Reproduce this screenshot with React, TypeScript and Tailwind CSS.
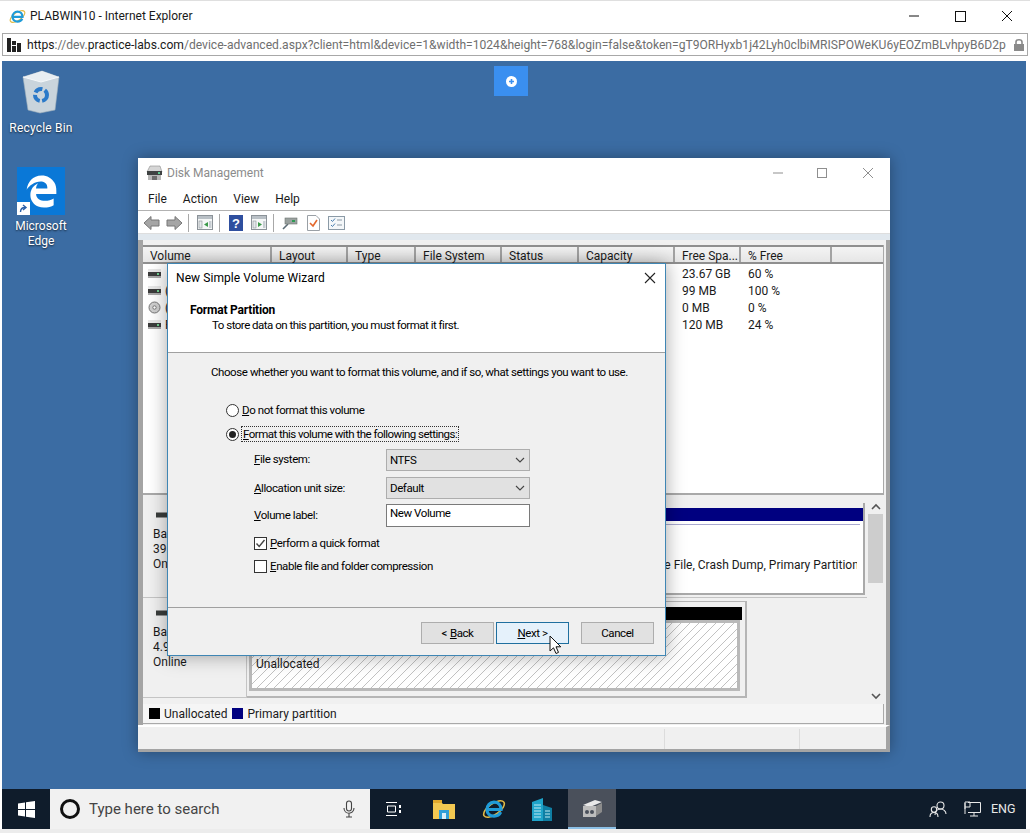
import React from "react";
import { FaEdgeLegacy } from "react-icons/fa";

function IELogo({ size = 18 }: { size?: number }) {
  return (
    <svg width={size} height={size} viewBox="0 0 24 24" fill="none">
      <ellipse cx="12" cy="12" rx="12" ry="5.5" transform="rotate(-35 12 12)" stroke="#e3bb45" strokeWidth="1.6" />
      <path d="M5 12.5H19C19 8 16 5.2 12 5.2C8 5.2 5 8.5 5 12.5C5 16.5 8 19.2 12 19.2C15 19.2 17.5 17.8 18.7 15.2" stroke="#1f9bd8" strokeWidth="3.2" />
    </svg>
  );
}

function Drive({ disc = false }: { disc?: boolean }) {
  if (disc)
    return (
      <svg width="13" height="13" viewBox="0 0 13 13">
        <circle cx="6.5" cy="6.5" r="5.5" fill="#cfcfcf" stroke="#777" />
        <circle cx="6.5" cy="6.5" r="1.7" fill="#fff" stroke="#777" />
      </svg>
    );
  return (
    <svg width="13" height="9" viewBox="0 0 13 9">
      <rect x="0" y="0" width="13" height="3" fill="#e8e8e8" />
      <rect x="0" y="3" width="13" height="4" fill="#3c3c3c" />
      <rect x="9" y="4" width="2" height="2" fill="#6fcf8f" />
      <rect x="0" y="7" width="13" height="2" fill="#a8a8a8" />
    </svg>
  );
}

function DiskIcon() {
  return (
    <svg width="18" height="6" viewBox="0 0 18 6">
      <rect width="18" height="5" y="0.5" fill="#3a3d3c" />
      <rect x="12" y="2" width="2" height="2" fill="#55c48b" />
    </svg>
  );
}

function Toolbar() {
  const sep = <div className="w-px h-[18px] bg-[#a8a8a8]" />;
  const arrow = (flip: boolean) => (
    <svg width="17" height="16" viewBox="0 0 17 16" className={flip ? "-scale-x-100" : ""}>
      <path d="M1 8 8 1.5V5H16V11H8V14.5Z" fill="#a5a5a5" stroke="#777" />
    </svg>
  );
  const pane = (right: boolean) => (
    <svg width="16" height="15" viewBox="0 0 16 15">
      <rect x="0.5" y="0.5" width="15" height="14" fill="#f5f7f7" stroke="#8b9298" />
      <rect x="1" y="1" width="14" height="3" fill="#b9c0c6" />
      <rect x="2" y="6" width="3" height="7" fill="#e4e8ea" stroke="#8b9298" strokeWidth="0.6" />
      <path d={right ? "M7 7 11 9.5 7 12Z" : "M11 7 7 9.5 11 12Z"} fill="#3c9a4a" />
      <rect x="12" y="6" width="2.5" height="7" fill="#c7cdd2" />
    </svg>
  );
  return (
    <div className="h-[22px] bg-white flex items-center pl-[5px] pt-[1px]">
      {arrow(false)}
      <div className="w-[6px]" />
      {arrow(true)}
      <div className="w-[5px]" />
      {sep}
      <div className="w-[8px]" />
      {pane(false)}
      <div className="w-[6px]" />
      {sep}
      <div className="w-[9px]" />
      <svg width="14" height="16" viewBox="0 0 14 16">
        <rect width="14" height="16" fill="#2f4f9f" />
        <text x="7" y="13" textAnchor="middle" fontSize="13" fontWeight="700" fill="#fff" fontFamily="Liberation Sans">?</text>
      </svg>
      <div className="w-[8px]" />
      {pane(true)}
      <div className="w-[6px]" />
      {sep}
      <div className="w-[8px]" />
      <svg width="16" height="15" viewBox="0 0 16 15">
        <path d="M1 14 6 9" stroke="#5b6b75" strokeWidth="1.6" />
        <rect x="3" y="3" width="12" height="6" fill="#9aa19f" stroke="#6e7573" strokeWidth="0.6" />
        <rect x="10" y="5" width="3" height="2" fill="#2e9a54" />
      </svg>
      <div className="w-[9px]" />
      <svg width="13" height="16" viewBox="0 0 13 16">
        <path d="M.5.5H9L12.5 4V15.5H.5Z" fill="#fff" stroke="#9aa0a6" />
        <path d="M3 8 6 11 10 5" stroke="#e4672b" strokeWidth="1.6" fill="none" />
      </svg>
      <div className="w-[8px]" />
      <svg width="17" height="14" viewBox="0 0 17 14">
        <rect x="0.5" y="0.5" width="16" height="13" fill="#f4f7f9" stroke="#8b9aa6" />
        <path d="M3 4 4.5 5.5 7 2.5M3 9 4.5 10.5 7 7.5" stroke="#4a7fb0" fill="none" />
        <path d="M9 4H14M9 9H14" stroke="#8b9aa6" />
      </svg>
    </div>
  );
}

const cols = [
  ["Volume", "w-[129px]"],
  ["Layout", "w-[76px]"],
  ["Type", "w-[68px]"],
  ["File System", "w-[86px]"],
  ["Status", "w-[77px]"],
  ["Capacity", "w-[96px]"],
  ["Free Spa...", "w-[66px]"],
  ["% Free", "w-[91px]"],
  ["", "flex-1"],
];

const rows: [string, string, string, boolean][] = [
  ["", "23.67 GB", "60 %", false],
  ["(Disk 0 partition 1)", "99 MB", "100 %", false],
  ["(D:)", "0 MB", "0 %", true],
  ["Recovery", "120 MB", "24 %", false],
];

function VolumeList() {
  return (
    <div className="h-[250px] bg-white border-b-2 border-r border-[#a9a9a9] flex flex-col">
      <div className="h-[19px] flex border-t-2 border-b-2 border-[#8f8f8f] bg-gradient-to-b from-[#f4f4f4] to-[#e6e6e6]">
        {cols.map(([name, w], i) => (
          <div key={i} className={`${w} pl-[7px] leading-[18px] border-r-2 border-[#a3a3a3] last:border-r-0 whitespace-nowrap`}>
            {name}
          </div>
        ))}
      </div>
      <div className="pt-[1px]">
        {rows.map(([v, free, pct, disc], i) => (
          <div key={i} className="h-[17px] flex items-center">
            <div className="w-[532px] flex items-center pl-[5px] gap-[4px] whitespace-nowrap">
              <div className="w-[13px] flex justify-center">
                <Drive disc={disc} />
              </div>
              <span>{v}</span>
            </div>
            <div className="w-[66px] pl-[7px]">{free}</div>
            <div className="pl-[7px]">{pct}</div>
          </div>
        ))}
      </div>
    </div>
  );
}

function DiskPanes() {
  return (
    <div className="h-[209px] flex bg-[#f0f0f0]">
      <div className="flex-1 flex flex-col min-w-0">
        <div className="h-[102px] flex pt-[8px] pb-[2px]">
          <div className="w-[106px] pl-[10px] pt-[9px] leading-[15px]">
            <div className="pl-[3px] h-[15px]"><DiskIcon /></div>
            <div>Basic</div>
            <div>39.88 GB</div>
            <div>Online</div>
          </div>
          <div className="w-[616px] border-r-2 border-b-2 border-[#a9a9a9] bg-white flex flex-col">
            <div className="h-[5px] bg-[#f0f0f0]" />
            <div className="h-[13px] bg-[#000080]" />
            <div className="h-[3px]" />
            <div className="h-px bg-[#a9a9d0] mr-[3px]" />
            <div className="flex-1 flex items-center justify-end pt-[12px] pr-[6px]">
              <div className="flex justify-end overflow-hidden">
                <span className="shrink-0 whitespace-nowrap -mr-[6px]">Healthy (Boot, Page File, Crash Dump, Primary Partition)</span>
              </div>
            </div>
          </div>
        </div>
        <div className="h-[107px] flex border-t border-[#c4c4c4] pt-[3px] pb-[6px]">
          <div className="w-[104px] pl-[10px] pt-[9px] leading-[15px] border-r border-[#c4c4c4] border-b">
            <div className="pl-[3px] h-[15px]"><DiskIcon /></div>
            <div>Basic</div>
            <div>4.98 GB</div>
            <div>Online</div>
          </div>
          <div className="w-[500px] border-r-2 border-b-2 border-t border-[#b5b5b5] pl-[2px] pr-[3px] pt-[5px] pb-[5px] flex flex-col">
            <div className="h-[13px] bg-black" />
            <div className="flex-1 border-[3px] border-[#b9b9b9] mr-[2px] pl-[4px] pt-[34px] leading-[15px] bg-[repeating-linear-gradient(135deg,#ffffff,#ffffff_5.5px,#c2c2c2_5.5px,#c2c2c2_6.2px)]">
              Unallocated
            </div>
          </div>
        </div>
      </div>
      <div className="w-[17px] flex flex-col items-center bg-[#f0f0f0] shrink-0">
        <svg width="10" height="7" viewBox="0 0 10 7" className="mt-[8px]"><path d="M1 6 5 2 9 6" fill="none" stroke="#555" strokeWidth="1.6" /></svg>
        <div className="w-[15px] h-[69px] mt-[4px] bg-[#cdcdcd]" />
        <div className="flex-1" />
        <svg width="10" height="7" viewBox="0 0 10 7" className="mb-[4px]"><path d="M1 1 5 5 9 1" fill="none" stroke="#555" strokeWidth="1.6" /></svg>
      </div>
    </div>
  );
}

function DiskManagement() {
  return (
    <div className="absolute left-[136px] top-[97px] w-[752px] h-[594px] flex flex-col bg-white shadow-[0_0_14px_rgba(0,0,0,0.35)]">
      <div className="h-[30px] flex items-center pl-[8px] shrink-0">
        <svg width="17" height="16" viewBox="0 0 17 16">
          <path d="M1 7 4 1H14L16 7Z" fill="#d6d6d6" stroke="#8a8a8a" strokeWidth="0.6" />
          <rect x="1" y="6" width="15" height="4" fill="#3f4242" />
          <rect x="12" y="7" width="2" height="2" fill="#5ac88f" />
          <rect x="2" y="10" width="13" height="5" fill="#b7b7b7" />
          <rect x="6" y="11" width="5" height="4" fill="#6d6d6d" />
        </svg>
        <span className="ml-[4px] text-[#8b8b8b]">Disk Management</span>
        <div className="flex-1" />
        <svg width="12" height="12" viewBox="0 0 12 12" className="mr-[33px]"><path d="M1 6H11" stroke="#8f8f8f" /></svg>
        <div className="w-[10px] h-[10px] border border-[#8f8f8f] mr-[35px]" />
        <svg width="12" height="12" viewBox="0 0 12 12" className="mr-[16px]"><path d="M1 1 11 11M11 1 1 11" stroke="#8f8f8f" /></svg>
      </div>
      <div className="h-[23px] flex items-center gap-[16px] pl-[10px] border-b border-[#b2b2b2] shrink-0">
        <span>File</span>
        <span>Action</span>
        <span>View</span>
        <span>Help</span>
      </div>
      <Toolbar />
      <div className="h-[7px] bg-[#e1e8ee] border-t border-[#dedede] shrink-0" />
      <div className="h-[485px] bg-[#f0f0f0] border-l-[5px] border-r-[4px] border-[#a4a4a4] pr-[2px] pt-[5px] flex flex-col shrink-0">
        <VolumeList />
        <DiskPanes />
        <div className="h-[20px] flex items-center gap-[4px] bg-[#f5f5f5] border-b border-r border-[#a9a9a9] pl-[6px]">
          <div className="w-[11px] h-[11px] bg-black" />
          <span className="mr-[1px]">Unallocated</span>
          <div className="w-[11px] h-[11px] bg-[#000080]" />
          <span>Primary partition</span>
        </div>
      </div>
      <div className="flex-1 bg-[#f0f0f0] border-t-[2px] border-t-white border-r-[4px] border-r-[#a4a4a4] flex justify-end">
        <div className="w-[135px] border-l border-[#dcdcdc] mt-[2px]" />
        <div className="w-[87px] border-l border-[#dcdcdc] mt-[2px]" />
      </div>
      <div className="h-[3px] bg-[#a4a4a4] shrink-0" />
    </div>
  );
}

function Radio({ on = false }: { on?: boolean }) {
  return (
    <div className="w-[13px] h-[13px] rounded-full border border-[#333] bg-white flex items-center justify-center shrink-0">
      {on && <div className="w-[7px] h-[7px] rounded-full bg-[#222]" />}
    </div>
  );
}

function Check({ on = false }: { on?: boolean }) {
  return (
    <div className="w-[13px] h-[13px] border border-[#333] bg-white shrink-0">
      {on && (
        <svg width="11" height="11" viewBox="0 0 11 11">
          <path d="M1.5 5.5 4.2 8.5 9.5 2" fill="none" stroke="#444" strokeWidth="1.4" />
        </svg>
      )}
    </div>
  );
}

function Select({ value, className = "" }: { value: string; className?: string }) {
  return (
    <div className={`w-[144px] h-[22px] bg-[#e1e1e1] border border-[#adadad] flex items-center pl-[3px] pr-[4px] ${className}`}>
      <span className="flex-1">{value}</span>
      <svg width="10" height="6" viewBox="0 0 10 6"><path d="M1 1 5 5 9 1" fill="none" stroke="#444" strokeWidth="1.1" /></svg>
    </div>
  );
}

function Btn({ children, active = false, className = "" }: { children: React.ReactNode; active?: boolean; className?: string }) {
  return (
    <div className={`w-[73px] h-[22px] flex items-center justify-center border ${active ? "bg-[#e5f1fb] border-[#1f6f9f]" : "bg-[#e1e1e1] border-[#adadad]"} ${className}`}>
      {children}
    </div>
  );
}

function Wizard() {
  return (
    <div className="absolute left-[165px] top-[202px] w-[499px] h-[393px] flex flex-col bg-[#f0f0f0] border border-[#3f86b4] shadow-[0_0_18px_rgba(0,0,0,0.35)] text-black text-[11.5px] tracking-[-0.42px]">
      <div className="h-[89px] bg-white border-b border-[#a0a0a0] shrink-0">
        <div className="h-[27px] flex items-center pl-[8px] pr-[9px] text-[12px] tracking-[0.08px]">
          <span className="flex-1">New Simple Volume Wizard</span>
          <svg width="12" height="12" viewBox="0 0 12 12"><path d="M1 1 11 11M11 1 1 11" stroke="#222" strokeWidth="1.1" /></svg>
        </div>
        <div className="pl-[22px] pt-[11px] font-bold leading-[16px] text-[12px] tracking-[-0.2px]">Format Partition</div>
        <div className="pl-[44px] leading-[15px] tracking-[-0.5px]">To store data on this partition, you must format it first.</div>
      </div>
      <div className="h-[255px] border-b border-[#a0a0a0] shrink-0 pt-[10px] pl-[43px] flex flex-col">
        <div className="h-[18px] leading-[18px] whitespace-nowrap">Choose whether you want to format this volume, and if so, what settings you want to use.</div>
        <div className="h-[18px] mt-[20px] flex items-center gap-[3px] ml-[15px]">
          <Radio />
          <span><u>D</u>o not format this volume</span>
        </div>
        <div className="h-[18px] mt-[6px] flex items-center gap-[2px] ml-[15px]">
          <Radio on />
          <span className="border border-dotted border-[#333] px-[1px] leading-[14px] tracking-[-0.52px]"><u>F</u>ormat this volume with the following settings:</span>
        </div>
        <div className="ml-[43px] mt-[6px] flex items-center h-[22px]">
          <span className="w-[132px] pb-[2px]"><u>F</u>ile system:</span>
          <Select value="NTFS" />
        </div>
        <div className="ml-[43px] mt-[6px] flex items-center h-[22px]">
          <span className="w-[132px] pb-[1px]"><u>A</u>llocation unit size:</span>
          <Select value="Default" />
        </div>
        <div className="ml-[43px] mt-[5px] flex items-center h-[23px]">
          <span className="w-[132px] pb-[2px]"><u>V</u>olume label:</span>
          <div className="w-[144px] h-[23px] bg-white border border-[#7a7a7a] pl-[3px] leading-[17px]">New Volume</div>
        </div>
        <div className="ml-[43px] mt-[9px] flex items-center gap-[3px] h-[14px]">
          <Check on />
          <span><u>P</u>erform a quick format</span>
        </div>
        <div className="ml-[43px] mt-[9px] flex items-center gap-[3px] h-[14px]">
          <Check />
          <span><u>E</u>nable file and folder compression</span>
        </div>
      </div>
      <div className="flex-1 flex justify-end items-start pt-[14px] pr-[11px]">
        <Btn className="mr-[2px]">&lt; <u className="ml-[3px]">B</u>ack</Btn>
        <Btn active className="mr-[12px]"><u>N</u>ext &gt;</Btn>
        <Btn>Cancel</Btn>
      </div>
    </div>
  );
}

function Taskbar() {
  return (
    <div className="h-[40px] ml-[2px] mr-[4px] bg-[#0f1c2b] flex items-stretch shrink-0">
      <div className="w-[48px] flex items-center justify-center">
        <svg width="17" height="17" viewBox="0 0 17 17" fill="#fff">
          <path d="M0 2.4 7 1.4V8H0ZM8 1.2 17 0V8H8ZM0 9H7V15.6L0 14.6ZM8 9H17V17L8 15.8Z" />
        </svg>
      </div>
      <div className="w-[320px] bg-[#f1f1f1] flex items-center pl-[10px] pr-[15px] text-[15px] text-[#444]">
        <div className="w-[20px] h-[20px] rounded-full border-[3px] border-[#111]" />
        <span className="ml-[9px] flex-1">Type here to search</span>
        <svg width="12" height="18" viewBox="0 0 12 18" fill="none" stroke="#444" strokeWidth="1.1">
          <rect x="3.5" y="1" width="5" height="10" rx="2.5" />
          <path d="M1 8C1 15 11 15 11 8M6 13V17M3 17H9" />
        </svg>
      </div>
      <div className="w-[46px] flex items-center justify-center">
        <svg width="16" height="16" viewBox="0 0 16 16" fill="none" stroke="#fff">
          <path d="M1 1.5H12M1 14.5H12M2.5 5H10.5V11H2.5Z" />
          <rect x="14" y="4" width="2" height="3" fill="#fff" stroke="none" />
          <rect x="14" y="9" width="2" height="3" fill="#fff" stroke="none" />
        </svg>
      </div>
      <div className="w-[56px] flex items-center justify-center">
        <svg width="22" height="20" viewBox="0 0 22 20">
          <path d="M0 3H8L10 5H22V20H0Z" fill="#f3c851" />
          <rect x="0" y="1" width="9" height="3" fill="#e3a92c" />
          <rect x="6" y="11" width="10" height="9" fill="#2f9fd8" />
          <rect x="9" y="14" width="4" height="6" fill="#d9eef8" />
        </svg>
      </div>
      <div className="w-[44px] flex items-center justify-center"><IELogo size={24} /></div>
      <div className="w-[52px] flex items-center justify-center">
        <svg width="22" height="24" viewBox="0 0 22 24">
          <path d="M1 5 12 1V24H1Z" fill="#1ea3c9" />
          <path d="M12 8 21 11V24H12Z" fill="#0f7ea3" />
          <path d="M3 8H10M3 11H10M3 14H10M3 17H10M3 20H10M14 14H19M14 17H19M14 20H19" stroke="#bdeaf4" strokeWidth="1.2" />
        </svg>
      </div>
      <div className="w-[48px] bg-[#4a505b] border-b-2 border-[#8cc0e6] flex items-center justify-center">
        <svg width="22" height="22" viewBox="0 0 22 22">
          <path d="M2 8 14 3 21 5 9 10Z" fill="#e9e9e9" />
          <rect x="2" y="9" width="13" height="11" fill="#bdbdbd" />
          <circle cx="6" cy="15" r="2" fill="#4a505b" />
          <circle cx="11" cy="15" r="2" fill="#4a505b" />
          <path d="M15 9 21 6V15L15 19Z" fill="#8c8c8c" />
        </svg>
      </div>
      <div className="flex-1" />
      <div className="flex items-center text-[#e8e8e8] text-[12.5px]">
        <svg width="18" height="17" viewBox="0 0 18 17" fill="none" stroke="#e8e8e8" strokeWidth="1.1">
          <circle cx="11.5" cy="4.5" r="3.5" />
          <path d="M6 14C6 9 10 8 12 8C14 8 17 10 17 13" />
          <circle cx="5" cy="8.5" r="2.7" />
          <path d="M1 16C1 13 3 11.5 5 11.5C7 11.5 9 13 9 16" />
        </svg>
        <svg width="17" height="16" viewBox="0 0 17 16" fill="none" stroke="#e8e8e8" className="ml-[17px]">
          <path d="M4 1.5H16.5V11.5H4M10 11.5V15M6 15H14M1 2V13M1 8V1H6V6H1" />
        </svg>
        <span className="ml-[10px] mr-[7px] w-[28px]">ENG</span>
      </div>
    </div>
  );
}

export default function App() {
  const dim = "text-[#6f6f6f]";
  return (
    <div className="w-[1030px] h-[833px] bg-white flex flex-col overflow-hidden font-['Roboto',sans-serif] text-[12px] leading-[16px] text-[#1a1a1a]">
      <div className="h-[33px] border-t border-[#dfdfdf] flex items-center pl-[9px] pb-[2px] shrink-0">
        <IELogo size={17} />
        <span className="ml-[4px]">PLABWIN10 - Internet Explorer</span>
        <div className="flex-1" />
        <svg width="12" height="12" viewBox="0 0 12 12" className="mr-[35px]"><path d="M1 6H11" stroke="#111" /></svg>
        <div className="w-[11px] h-[11px] border border-[#111] mr-[35px]" />
        <svg width="12" height="12" viewBox="0 0 12 12" className="mr-[17px]"><path d="M1 1 11 11M11 1 1 11" stroke="#111" /></svg>
      </div>
      <div className="h-[28px] shrink-0 pl-[2px] pr-[2px]">
        <div className="h-[23px] border border-[#a8a8a8] flex items-center pl-[4px] pr-[2px]">
          <svg width="14" height="16" viewBox="0 0 14 16" className="shrink-0">
            <path d="M0 1H4V15H0ZM5 4H9V8H5ZM10 6H14V15H10ZM5 9H9V15H5Z" fill="#222" />
          </svg>
          <div className="ml-[6px] flex-1 whitespace-nowrap overflow-hidden text-[12.1px]">
            <span>https</span>
            <span className={dim}>://dev.</span>
            <span>practice-labs.com</span>
            <span className={dim}>/device-advanced.aspx?client=html&amp;device=1&amp;width=1024&amp;height=768&amp;login=false&amp;token=gT9ORHyxb1j42Lyh0clbiMRISPOWeKU6yEOZmBLvhpyB6D2p</span>
          </div>
          <svg width="12" height="13" viewBox="0 0 12 13" className="ml-[3px] shrink-0">
            <path d="M3 6V4C3 1 9 1 9 4V6" fill="none" stroke="#8a8a8a" strokeWidth="1.6" />
            <rect x="1" y="6" width="10" height="7" fill="#8a8a8a" />
          </svg>
        </div>
      </div>
      <div className="flex-1 ml-[2px] mr-[4px] bg-[#3b6ca3] relative overflow-hidden text-white">
        <div className="absolute left-[492px] top-[5px] w-[34px] h-[30px] bg-[#3a8ff0] flex items-center justify-center">
          <div className="w-[11px] h-[11px] rounded-full bg-white flex items-center justify-center">
            <svg width="7" height="7" viewBox="0 0 7 7"><path d="M3.5 1V6M1 3.5H6" stroke="#3a8ff0" strokeWidth="1.6" /></svg>
          </div>
        </div>
        <div className="absolute left-[4px] top-[9px] w-[70px] flex flex-col items-center">
          <svg width="38" height="44" viewBox="0 0 38 44">
            <path d="M1 7 20 1 37 7 33 40 18 43 6 40Z" fill="#c9d4dc" stroke="#9fb0bc" strokeWidth="0.6" />
            <path d="M1 7 19 12 37 7 20 1Z" fill="#e8eef2" />
            <path d="M1 7 19 12 37 7" fill="none" stroke="#f5f8fa" />
            <circle cx="19" cy="25" r="6" fill="none" stroke="#2a79c9" strokeWidth="4" strokeDasharray="8 2.5" />
          </svg>
          <span className="mt-[6px] tracking-[0.2px] [text-shadow:0_1px_2px_rgba(0,0,0,0.7)] leading-[16px]">Recycle Bin</span>
        </div>
        <div className="absolute left-[4px] top-[106px] w-[70px] flex flex-col items-center">
          <div className="w-[48px] h-[48px] bg-[#0a78d7] flex items-center justify-center relative">
            <FaEdgeLegacy size={33} color="#fff" />
            <div className="absolute left-0 bottom-0 w-[13px] h-[13px] bg-white flex items-center justify-center">
              <svg width="9" height="9" viewBox="0 0 9 9"><path d="M1.5 8C1.5 4.5 3 3.5 6 3.5M4 1 7 3.5 4 6" fill="none" stroke="#2a5fa8" strokeWidth="1.4" /></svg>
            </div>
          </div>
          <span className="mt-[4px] text-center leading-[15px] [text-shadow:0_1px_2px_rgba(0,0,0,0.7)]">Microsoft<br />Edge</span>
        </div>
        <div className="text-[#1a1a1a]">
          <DiskManagement />
          <Wizard />
        </div>
        <svg width="13" height="20" viewBox="0 0 13 20" className="absolute left-[547px] top-[574px]">
          <path d="M1 1V16L4.5 12.8 7 18.5 9.5 17.4 7 11.8H11.8Z" fill="#fff" stroke="#111" strokeWidth="1" />
        </svg>
      </div>
      <Taskbar />
      <div className="h-[4px] bg-[#ececec] shrink-0" />
    </div>
  );
}
